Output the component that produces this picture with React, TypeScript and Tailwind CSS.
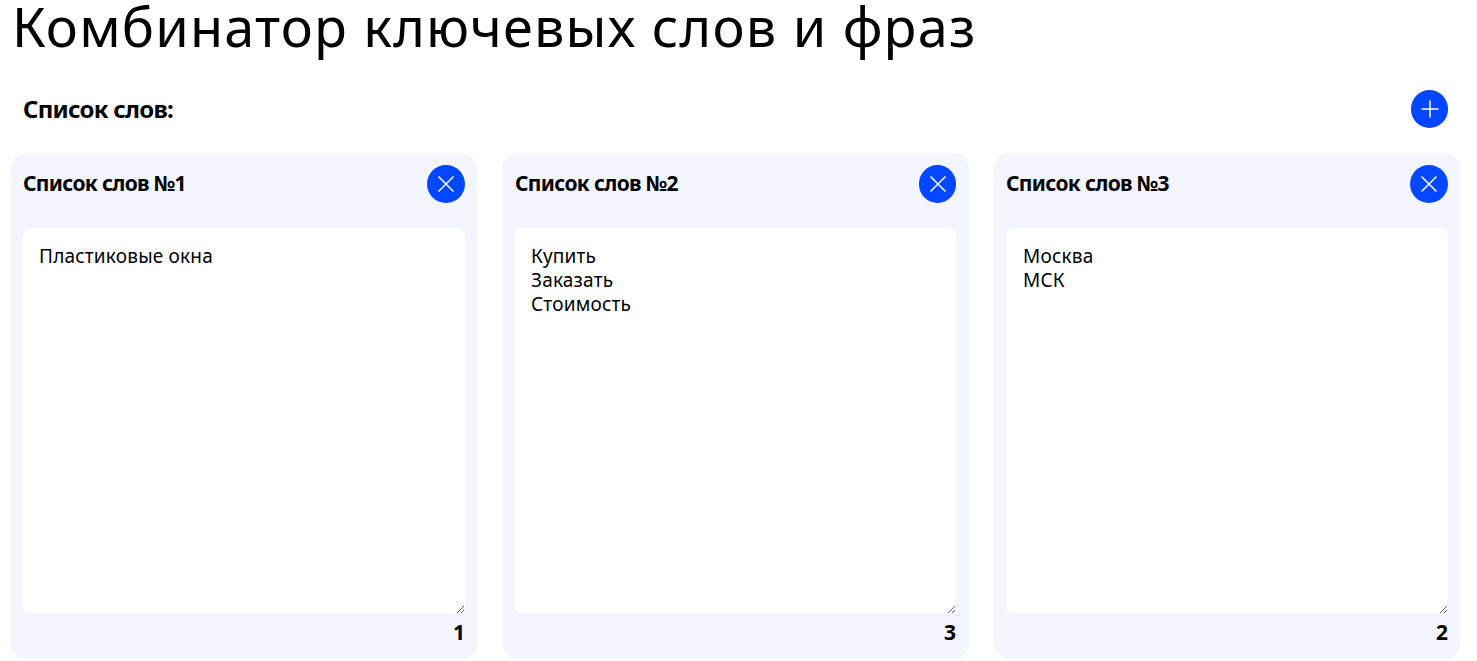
import React from "react";

function Icon({ kind, narrow }: { kind: "plus" | "x"; narrow?: boolean }) {
  return (
    <button className={`${narrow ? "w-[37px]" : "w-[38px]"} h-[38px] rounded-full bg-[#0047ff] flex items-center justify-center shrink-0`}>
      <svg width="38" height="38" viewBox="0 0 38 38" fill="none" stroke="#fff" strokeWidth="1.5" className="shrink-0">
        {kind === "plus" ? (
          <path d="M19 10.5V27.5M10.5 19H27.5" />
        ) : (
          <path d="M11.5 11.5L26.5 26.5M26.5 11.5L11.5 26.5" />
        )}
      </svg>
    </button>
  );
}

function Card({ n, text, count, wide, last }: { n: number; text: string; count: number; wide?: boolean; last?: boolean }) {
  return (
    <div className={`${wide ? "px-[13px]" : "px-3"} bg-[#f3f6ff] rounded-[15px] h-[506px] flex flex-col`}>
      <div className="flex items-center justify-between h-[62px]">
        <div className="text-[21px] font-bold tracking-[-0.67px] whitespace-nowrap">Список слов №{n}</div>
        <Icon kind="x" narrow={wide} />
      </div>
      <textarea
        className={`${last ? "pl-[17px]" : "pl-[16px]"} mt-[13px] w-full h-[386px] shrink-0 bg-white rounded-[8px] pr-[16px] py-[16px] text-[19px] tracking-[0.2px] leading-[24px] text-black outline-none block`}
        defaultValue={text}
      />
      <div className="text-right text-[21px] font-bold leading-[24px] mt-[6px]">{count}</div>
    </div>
  );
}

export default function App() {
  return (
    <div className="w-[1477px] h-[661px] bg-white text-black pl-[11px] font-['Noto_Sans','Open_Sans',sans-serif]">
      <h1 className="text-[54px] leading-[52px] font-normal pl-[1px] tracking-[1.2px] whitespace-nowrap">Комбинатор ключевых слов и фраз</h1>
      <div className="flex items-center justify-between pl-3 pr-3 w-[1449px] mt-[38px] h-[38px]">
        <div className="text-[24px] font-bold tracking-[-0.75px]">Список слов:</div>
        <Icon kind="plus" narrow />
      </div>
      <div className="grid grid-cols-[466px_467px_466px] gap-[25px] mt-[25px]">
        <Card n={1} text={"Пластиковые окна"} count={1} />
        <Card n={2} text={"Купить\nЗаказать\nСтоимость"} count={3} wide />
        <Card n={3} text={"Москва\nМСК"} count={2} last />
      </div>
    </div>
  );
}
